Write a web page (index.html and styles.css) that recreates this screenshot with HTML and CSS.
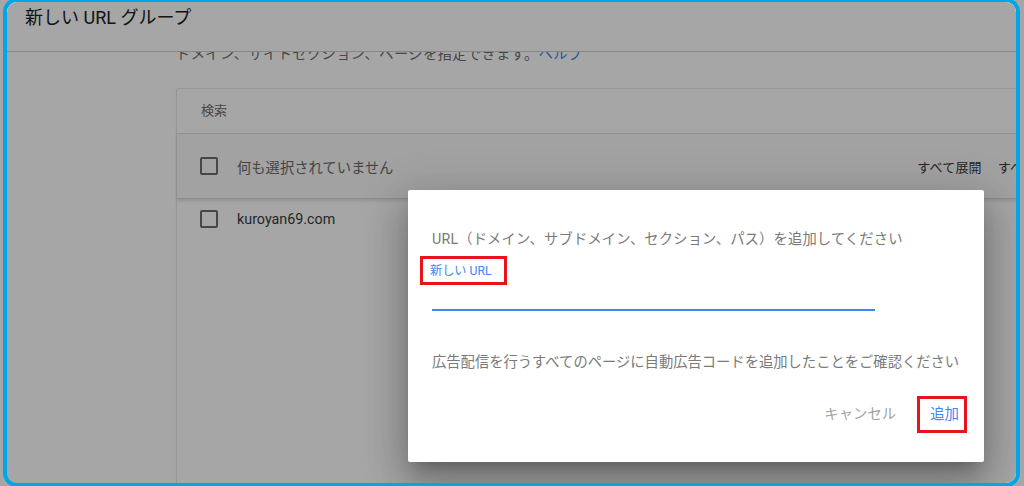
FILE: index.html
```html
<!DOCTYPE html>
<html lang="ja">
<head>
<meta charset="utf-8">
<title>新しい URL グループ</title>
<link rel="stylesheet" href="styles.css">
</head>
<body>
<div class="frame">
  <header class="page-header">
    <h1 class="page-title">新しい URL グループ</h1>
  </header>
  <main class="main">
    <p class="desc">ドメイン、サイトセクション、ページを指定できます。<a class="help">ヘルプ</a></p>
    <section class="card">
      <div class="search">検索</div>
      <div class="row head-row">
        <span class="checkbox"></span>
        <span class="row-label muted">何も選択されていません</span>
        <span class="actions">
          <span class="action">すべて展開</span>
          <span class="action">すべて折りたたむ</span>
        </span>
      </div>
      <div class="row">
        <span class="checkbox"></span>
        <span class="row-label">kuroyan69.com</span>
      </div>
    </section>
  </main>
  <div class="backdrop"></div>
  <div class="dialog">
    <p class="dialog-text first">URL（ドメイン、サブドメイン、セクション、パス）を追加してください</p>
    <span class="field-label">新しい URL</span>
    <div class="field-line"></div>
    <p class="dialog-text confirm">広告配信を行うすべてのページに自動広告コードを追加したことをご確認ください</p>
    <div class="dialog-actions">
      <span class="btn cancel">キャンセル</span>
      <span class="btn add">追加</span>
    </div>
  </div>
</div>
</body>
</html>
```

FILE: styles.css
```css
html, body {
  margin: 0;
  padding: 0;
  width: 1024px;
  height: 486px;
  overflow: hidden;
  background: #a6a6a6;
  font-family: Roboto, "Noto Sans CJK JP", sans-serif;
}

.frame {
  position: relative;
  box-sizing: border-box;
  width: 1017px;
  height: 489px;
  margin: -2px 0 0 3px;
  border: 4px solid #00a6ea;
  border-radius: 14px;
  overflow: hidden;
  background: #ffffff;
}

.page-header {
  position: relative;
  z-index: 1;
  box-sizing: border-box;
  height: 50px;
  padding: 4px 0 0 18px;
  background: #ffffff;
  border-bottom: 1px solid #cfcfcf;
}

.page-title {
  margin: 0;
  font-size: 18px;
  line-height: 24px;
  font-weight: 400;
  color: #202020;
}

.main {
  padding-left: 169px;
}

.desc {
  margin: -7px 0 0 0;
  font-size: 14.4px;
  line-height: 20px;
  letter-spacing: 0.25px;
  color: #6f6f6f;
}

.help {
  color: #4285f4;
}

.card {
  box-sizing: border-box;
  width: 951px;
  height: 600px;
  margin-top: 23px;
  border: 1px solid #e6e6e6;
  border-radius: 2px;
  box-shadow: 0 1px 2px rgba(0, 0, 0, 0.08);
  background: #ffffff;
}

.search {
  box-sizing: border-box;
  height: 45px;
  padding: 0 0 4px 24px;
  display: flex;
  align-items: center;
  font-size: 13px;
  color: #6f6f6f;
  border-bottom: 1px solid #e0e0e0;
}

.row {
  display: flex;
  align-items: center;
  height: 40px;
  padding-left: 23px;
  font-size: 14.3px;
}

.head-row {
  position: relative;
  height: 64px;
  padding-right: 24px;
  background: #f9f9f9;
  border-bottom: 1px solid #dadada;
  box-shadow: 0 2px 3px rgba(0, 0, 0, 0.12);
}

.checkbox {
  box-sizing: border-box;
  width: 18px;
  height: 18px;
  border: 2px solid #6e6e6e;
  border-radius: 2px;
  flex-shrink: 0;
}

.row-label {
  margin-left: 19px;
  color: #3a3a3a;
}

.row-label.muted {
  color: #6a6a6a;
}

.actions {
  margin-left: auto;
  display: flex;
  gap: 16px;
  padding-top: 1px;
  font-size: 13px;
  letter-spacing: 0.2px;
  color: #3a3a3a;
}

.backdrop {
  position: absolute;
  inset: 0;
  z-index: 2;
  background: rgba(0, 0, 0, 0.35);
}

.dialog {
  position: absolute;
  z-index: 3;
  left: 401px;
  top: 188px;
  box-sizing: border-box;
  width: 576px;
  height: 272px;
  padding: 39px 17px 0 24px;
  background: #ffffff;
  border-radius: 2px;
  box-shadow: 0 11px 15px -7px rgba(0, 0, 0, 0.25), 0 24px 38px 3px rgba(0, 0, 0, 0.18), 0 9px 46px 8px rgba(0, 0, 0, 0.14);
}

.dialog-text {
  margin: 0;
  font-size: 14.3px;
  line-height: 20px;
  color: #7a7a7a;
  white-space: nowrap;
}

.first {
  letter-spacing: 0.15px;
}

.confirm {
  margin-top: 41px;
}

.field-label {
  display: inline-block;
  margin: 7px 0 0 -12px;
  padding: 5px 12px 4px 7px;
  border: 3px solid #e8141c;
  font-size: 12.2px;
  line-height: 14px;
  color: #4285f4;
}

.field-line {
  width: 443px;
  height: 2px;
  margin-top: 24px;
  background: #4285f4;
}

.dialog-actions {
  display: flex;
  justify-content: flex-end;
  align-items: center;
  margin-top: 24px;
  gap: 21px;
}

.btn {
  font-size: 14.4px;
  line-height: 20px;
}

.cancel {
  color: #a3a3a3;
}

.add {
  padding: 6px 5px 5px 10px;
  border: 3px solid #e8141c;
  color: #4285f4;
}
```
